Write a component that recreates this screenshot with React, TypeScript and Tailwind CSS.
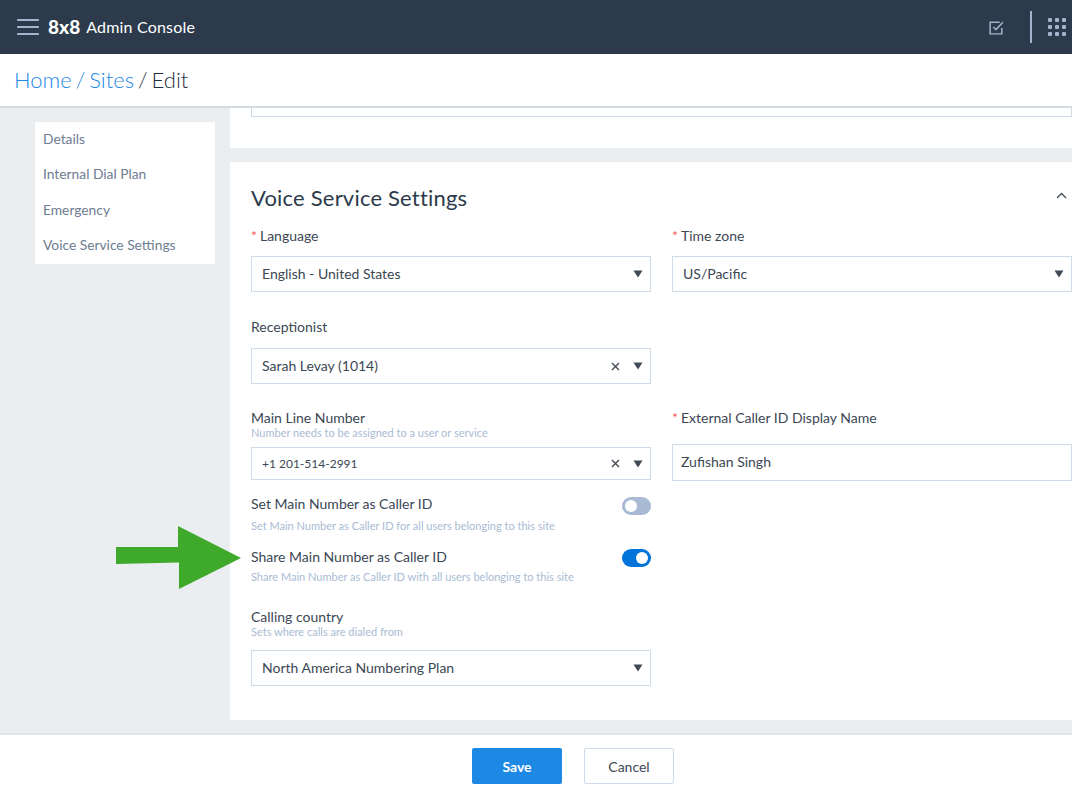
import React, { FC } from "react";

const font = { fontFamily: "Lato" };

const Caret: FC = () => (
  <svg width="10" height="8" viewBox="0 0 10 8" className="shrink-0">
    <path d="M0.5 0.5h9L5 7.5z" fill="#3f4a56" />
  </svg>
);

const Clear: FC = () => (
  <svg width="9" height="9" viewBox="0 0 9 9" className="shrink-0">
    <path d="M1 1l7 7M8 1l-7 7" stroke="#3f4a56" strokeWidth="1.4" />
  </svg>
);

const Select: FC<{ value: string; clear?: boolean; h: string; small?: boolean }> = ({ value, clear, h, small }) => (
  <div className={`${h} w-[400px] flex items-center border border-[#cfdbe6] bg-white pl-[10px] pr-[7px]`}>
    <span className={`flex-1 text-[#3b4754] ${small ? "text-[12px]" : "text-[14px] pb-[2px]"}`}>{value}</span>
    {clear && (
      <span className="mr-[13px]">
        <Clear />
      </span>
    )}
    <Caret />
  </div>
);

const Label: FC<{ text: string; required?: boolean }> = ({ text, required }) => (
  <div className="text-[14px] leading-[18px] text-[#3b4754]">
    {required && <span className="text-[#f0605f] mr-[3px]">*</span>}
    {text}
  </div>
);

const Hint: FC<{ text: string }> = ({ text }) => (
  <div className="text-[11px] leading-[14px] text-[#a9bbd4]">{text}</div>
);

const Toggle: FC<{ on?: boolean }> = ({ on }) => (
  <div className={`w-[29px] h-[18px] rounded-full flex items-center px-[3px] ${on ? "bg-[#0074d9] justify-end mt-[2px]" : "bg-[#a8bad4] justify-start mt-[4px]"}`}>
    <div className="w-[12px] h-[12px] rounded-full bg-white" />
  </div>
);

const ToggleRow: FC<{ title: string; hint: string; on?: boolean }> = ({ title, hint, on }) => (
  <div className="w-[400px]">
    <div className="flex items-center justify-between h-[18px]">
      <Label text={title} />
      <Toggle on={on} />
    </div>
    <div className={on ? "mt-[4px]" : "mt-[6px]"}>
      <Hint text={hint} />
    </div>
  </div>
);

export default function App() {
  const nav = ["Details", "Internal Dial Plan", "Emergency", "Voice Service Settings"];
  return (
    <div className="relative w-[1072px] h-[797px] overflow-hidden flex flex-col bg-white" style={font}>
      {/* header */}
      <div className="h-[54px] shrink-0 bg-[#2c3a4b] flex items-center pl-[17px]">
        <svg width="22" height="18" viewBox="0 0 22 18">
          <path d="M1 2h20M1 9h20M1 16h20" stroke="#a3b4cc" strokeWidth="2.2" strokeLinecap="round" />
        </svg>
        <span className="ml-[9px] text-[19px] font-black text-white">8x8</span>
        <span className="ml-[6px] pb-[1px] text-[16px] text-white tracking-[0.2px]">Admin Console</span>
        <div className="ml-auto flex items-center">
          <svg width="17" height="17" viewBox="0 0 16 16">
            <path d="M13 8.5V14H2V3h9" fill="none" stroke="#a3b4cc" strokeWidth="1.4" />
            <path d="M5 7.5l2.5 2.5L14 3" fill="none" stroke="#a3b4cc" strokeWidth="1.4" />
          </svg>
          <div className="ml-[25px] w-[2px] h-[32px] bg-[#a3b4cc]" />
          <div className="ml-[16px] mr-[6px] grid grid-cols-3 gap-[3px]">
            {Array.from({ length: 9 }).map((_, i) => (
              <div key={i} className="w-[4px] h-[4px] rounded-[1px] bg-[#a3b4cc]" />
            ))}
          </div>
        </div>
      </div>

      {/* breadcrumb */}
      <div className="h-[54px] shrink-0 flex items-center pl-[14px] pb-[2px] border-b-2 border-[#d5dbe3] text-[22px] font-light [word-spacing:-2px]">
        <span className="text-[#1e88e5]">Home / Sites&nbsp;</span>
        <span className="text-[#1f2f42]">/ Edit</span>
      </div>

      {/* body */}
      <div className="flex-1 min-h-0 flex bg-[#ebeef1] overflow-hidden">
        <div className="w-[230px] shrink-0 pl-[35px] pr-[15px] pt-[14px]">
          <div className="bg-white h-[142px] pl-[8px]">
            {nav.map((n) => (
              <div key={n} className="h-[35.5px] pb-[1px] flex items-center text-[13.8px] text-[#6d7c91]">
                {n}
              </div>
            ))}
          </div>
        </div>

        <div className="flex-1 min-w-0 flex flex-col">
          <div className="h-[40px] shrink-0 bg-white pl-[21px]">
            <div className="h-[9px] border border-t-0 border-[#cfdbe6]" />
          </div>

          <div className="mt-[14px] h-[558px] shrink-0 bg-white pl-[21px] pt-[23px]">
            <div className="flex items-center justify-between h-[26px]">
              <h2 className="text-[22px] pb-[2px] tracking-[0.2px] text-[#2c3a4b]">Voice Service Settings</h2>
              <svg width="11" height="7" viewBox="0 0 11 7" className="mr-[5px] mb-[6px]">
                <path d="M1 6l4.5-4.5L10 6" fill="none" stroke="#3f4a56" strokeWidth="1.3" />
              </svg>
            </div>

            <div className="mt-[16px] flex gap-[21px]">
              <div>
                <Label text="Language" required />
                <div className="mt-[11px]">
                  <Select value="English - United States" h="h-[36px]" />
                </div>
              </div>
              <div>
                <Label text="Time zone" required />
                <div className="mt-[11px]">
                  <Select value="US/Pacific" h="h-[36px]" />
                </div>
              </div>
            </div>

            <div className="mt-[26px]">
              <Label text="Receptionist" />
              <div className="mt-[12px]">
                <Select value="Sarah Levay (1014)" clear h="h-[36px]" />
              </div>
            </div>

            <div className="mt-[25px] flex gap-[21px]">
              <div>
                <Label text="Main Line Number" />
                <div className="-mt-[1px]">
                  <Hint text="Number needs to be assigned to a user or service" />
                </div>
                <div className="mt-[7px]">
                  <Select value="+1 201-514-2991" clear small h="h-[33px]" />
                </div>
              </div>
              <div>
                <Label text="External Caller ID Display Name" required />
                <div className="mt-[17px] h-[37px] w-[400px] flex items-center border border-[#cfdbe6] pl-[8px] pb-[2px] text-[14px] text-[#3b4754]">
                  Zufishan Singh
                </div>
              </div>
            </div>

            <div className="mt-[14px]">
              <ToggleRow
                title="Set Main Number as Caller ID"
                hint="Set Main Number as Caller ID for all users belonging to this site"
              />
            </div>
            <div className="mt-[15px]">
              <ToggleRow
                title="Share Main Number as Caller ID"
                hint="Share Main Number as Caller ID with all users belonging to this site"
                on
              />
            </div>

            <div className="mt-[24px]">
              <Label text="Calling country" />
              <div className="-mt-[1px]">
                <Hint text="Sets where calls are dialed from" />
              </div>
              <div className="mt-[11px]">
                <Select value="North America Numbering Plan" h="h-[36px]" />
              </div>
            </div>
          </div>
        </div>
      </div>

      {/* footer */}
      <div className="h-[64px] shrink-0 bg-white border-t-2 border-[#dfe4ea] flex items-center justify-center gap-[22px] pl-[74px]">
        <button className="w-[90px] h-[36px] rounded-[2px] bg-[#1e88e5] text-white text-[14px] font-bold">Save</button>
        <button className="w-[90px] h-[36px] rounded-[2px] border border-[#cfdbe6] text-[#3b4754] text-[14px]">Cancel</button>
      </div>

      {/* annotation arrow */}
      <svg width="126" height="64" viewBox="0 0 126 64" className="absolute left-[116px] top-[526px]">
        <path d="M0 21h62V0l63 32-62 31V36.5L0 38z" fill="#3fa92c" />
      </svg>
    </div>
  );
}
